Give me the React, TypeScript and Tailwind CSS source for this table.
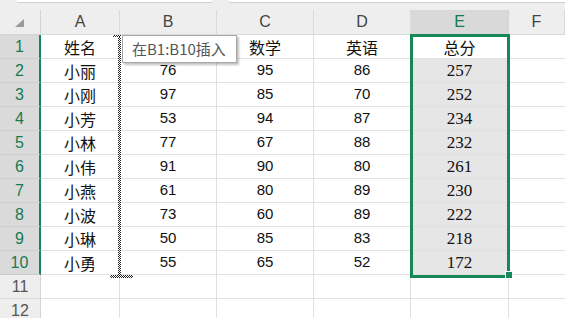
import React from "react";

const rows: [string, string, string, string, string][] = [
  ["姓名", "", "数学", "英语", "总分"],
  ["小丽", "76", "95", "86", "257"],
  ["小刚", "97", "85", "70", "252"],
  ["小芳", "53", "94", "87", "234"],
  ["小林", "77", "67", "88", "232"],
  ["小伟", "91", "90", "80", "261"],
  ["小燕", "61", "80", "89", "230"],
  ["小波", "73", "60", "89", "222"],
  ["小琳", "50", "85", "83", "218"],
  ["小勇", "55", "65", "52", "172"],
  ["", "", "", "", ""],
  ["", "", "", "", ""],
];

const cols = ["A", "B", "C", "D", "E", "F"];
const grid = "grid grid-cols-[41px_79px_97px_97px_97px_98px_56px]";
const cjk = "font-['Noto_Sans_CJK_SC',sans-serif]";
const sans = "font-['Liberation_Sans','Noto_Sans_CJK_SC',sans-serif]";
const serif = "font-['Liberation_Serif','Noto_Sans_CJK_SC',serif]";

function Cell({ text, col, row }: { text: string; col: number; row: number }) {
  const isE = col === 4;
  const selected = isE && row >= 1 && row <= 9;
  const isNum = /^\d+$/.test(text);
  const font = isNum ? (isE ? `${serif} text-[17px]` : `${sans} text-[15px]`) : `${cjk} text-[16px]`;
  return (
    <div
      className={`h-[24px] border-r border-b border-[#e0e0e0] flex items-center justify-center text-[#111] ${font} ${
        selected ? "bg-[#e6e6e6]" : "bg-white"
      }`}
    >
      {text}
    </div>
  );
}

export default function App() {
  return (
    <div className="relative w-[565px] h-[318px] overflow-hidden bg-white">
      {/* strip under the name box and formula bar */}
      <div className="h-[3px] flex bg-[#eeeeee]">
        <div className="w-[16px]" />
        <div className="w-[197px] bg-white rounded-b-[3px] border-b border-[#cfcfcf]" />
        <div className="w-[15px]" />
        <div className="flex-1 bg-white rounded-bl-[3px] border-b border-[#cfcfcf]" />
      </div>

      {/* column headers */}
      <div className={`${grid} h-[32px] bg-[#eeeeee] items-end`}>
        <div className="h-[25px] border-b border-r border-[#d4d4d4] flex items-center justify-center">
          <svg width="9" height="8" viewBox="0 0 9 8" className="ml-[-2px] mt-[1px]">
            <polygon points="9,0 9,8 0,8" fill="#9a9a9a" />
          </svg>
        </div>
        {cols.map((c) => (
          <div
            key={c}
            className={`h-[25px] border-r border-b flex items-center justify-center text-[16px] ${sans} ${
              c === "E"
                ? "bg-[#d9d9d9] text-[#157a52] border-[#d4d4d4]"
                : "text-[#444] border-[#dadada]"
            }`}
          >
            {c}
          </div>
        ))}
      </div>

      {/* sheet body */}
      {rows.map((r, i) => {
        const sel = i < 10;
        return (
          <div key={i} className={grid}>
            <div
              className={`h-[24px] border-b flex items-center justify-center text-[16px] ${sans} ${
                sel
                  ? "bg-[#dadada] text-[#157a52] border-b-[#cdcdcd] border-r-2 border-r-[#17875a]"
                  : "bg-[#eeeeee] text-[#555] border-b-[#dcdcdc] border-r border-r-[#d4d4d4]"
              }`}
            >
              {i + 1}
            </div>
            {r.map((t, j) => (
              <Cell key={j} text={t} col={j} row={i} />
            ))}
            <div className="h-[24px] border-b border-[#e0e0e0]" />
          </div>
        );
      })}

      {/* insertion marker along the left edge of B1:B10 */}
      <div className="absolute left-[118px] top-[35px] w-[3px] h-[242px] bg-[image:repeating-conic-gradient(#222_0_25%,#fff_0_50%)] bg-size-[2px_2px]" />
      <div className="absolute left-[113px] top-[35px] w-[8px] h-[2px] bg-[image:repeating-conic-gradient(#222_0_25%,#fff_0_50%)] bg-size-[2px_2px]" />
      <div className="absolute left-[110px] top-[275px] w-[23px] h-[3px] bg-[image:repeating-conic-gradient(#222_0_25%,#fff_0_50%)] bg-size-[2px_2px]" />

      {/* selection box E1:E10 */}
      <div className="absolute left-[410px] top-[34px] w-[100px] h-[244px] border-[3px] border-[#17875a]" />
      <div className="absolute left-[505px] top-[271px] w-[8px] h-[8px] bg-[#17875a] border border-white" />

      {/* tooltip */}
      <div
        className={`absolute left-[122px] top-[35px] w-[115px] h-[28px] bg-white border border-[#a8a8a8] shadow-[2px_2px_2px_rgba(0,0,0,0.25)] flex items-center pl-[9px] text-[15px] text-[#555] ${cjk}`}
      >
        在B1:B10插入
      </div>
    </div>
  );
}
